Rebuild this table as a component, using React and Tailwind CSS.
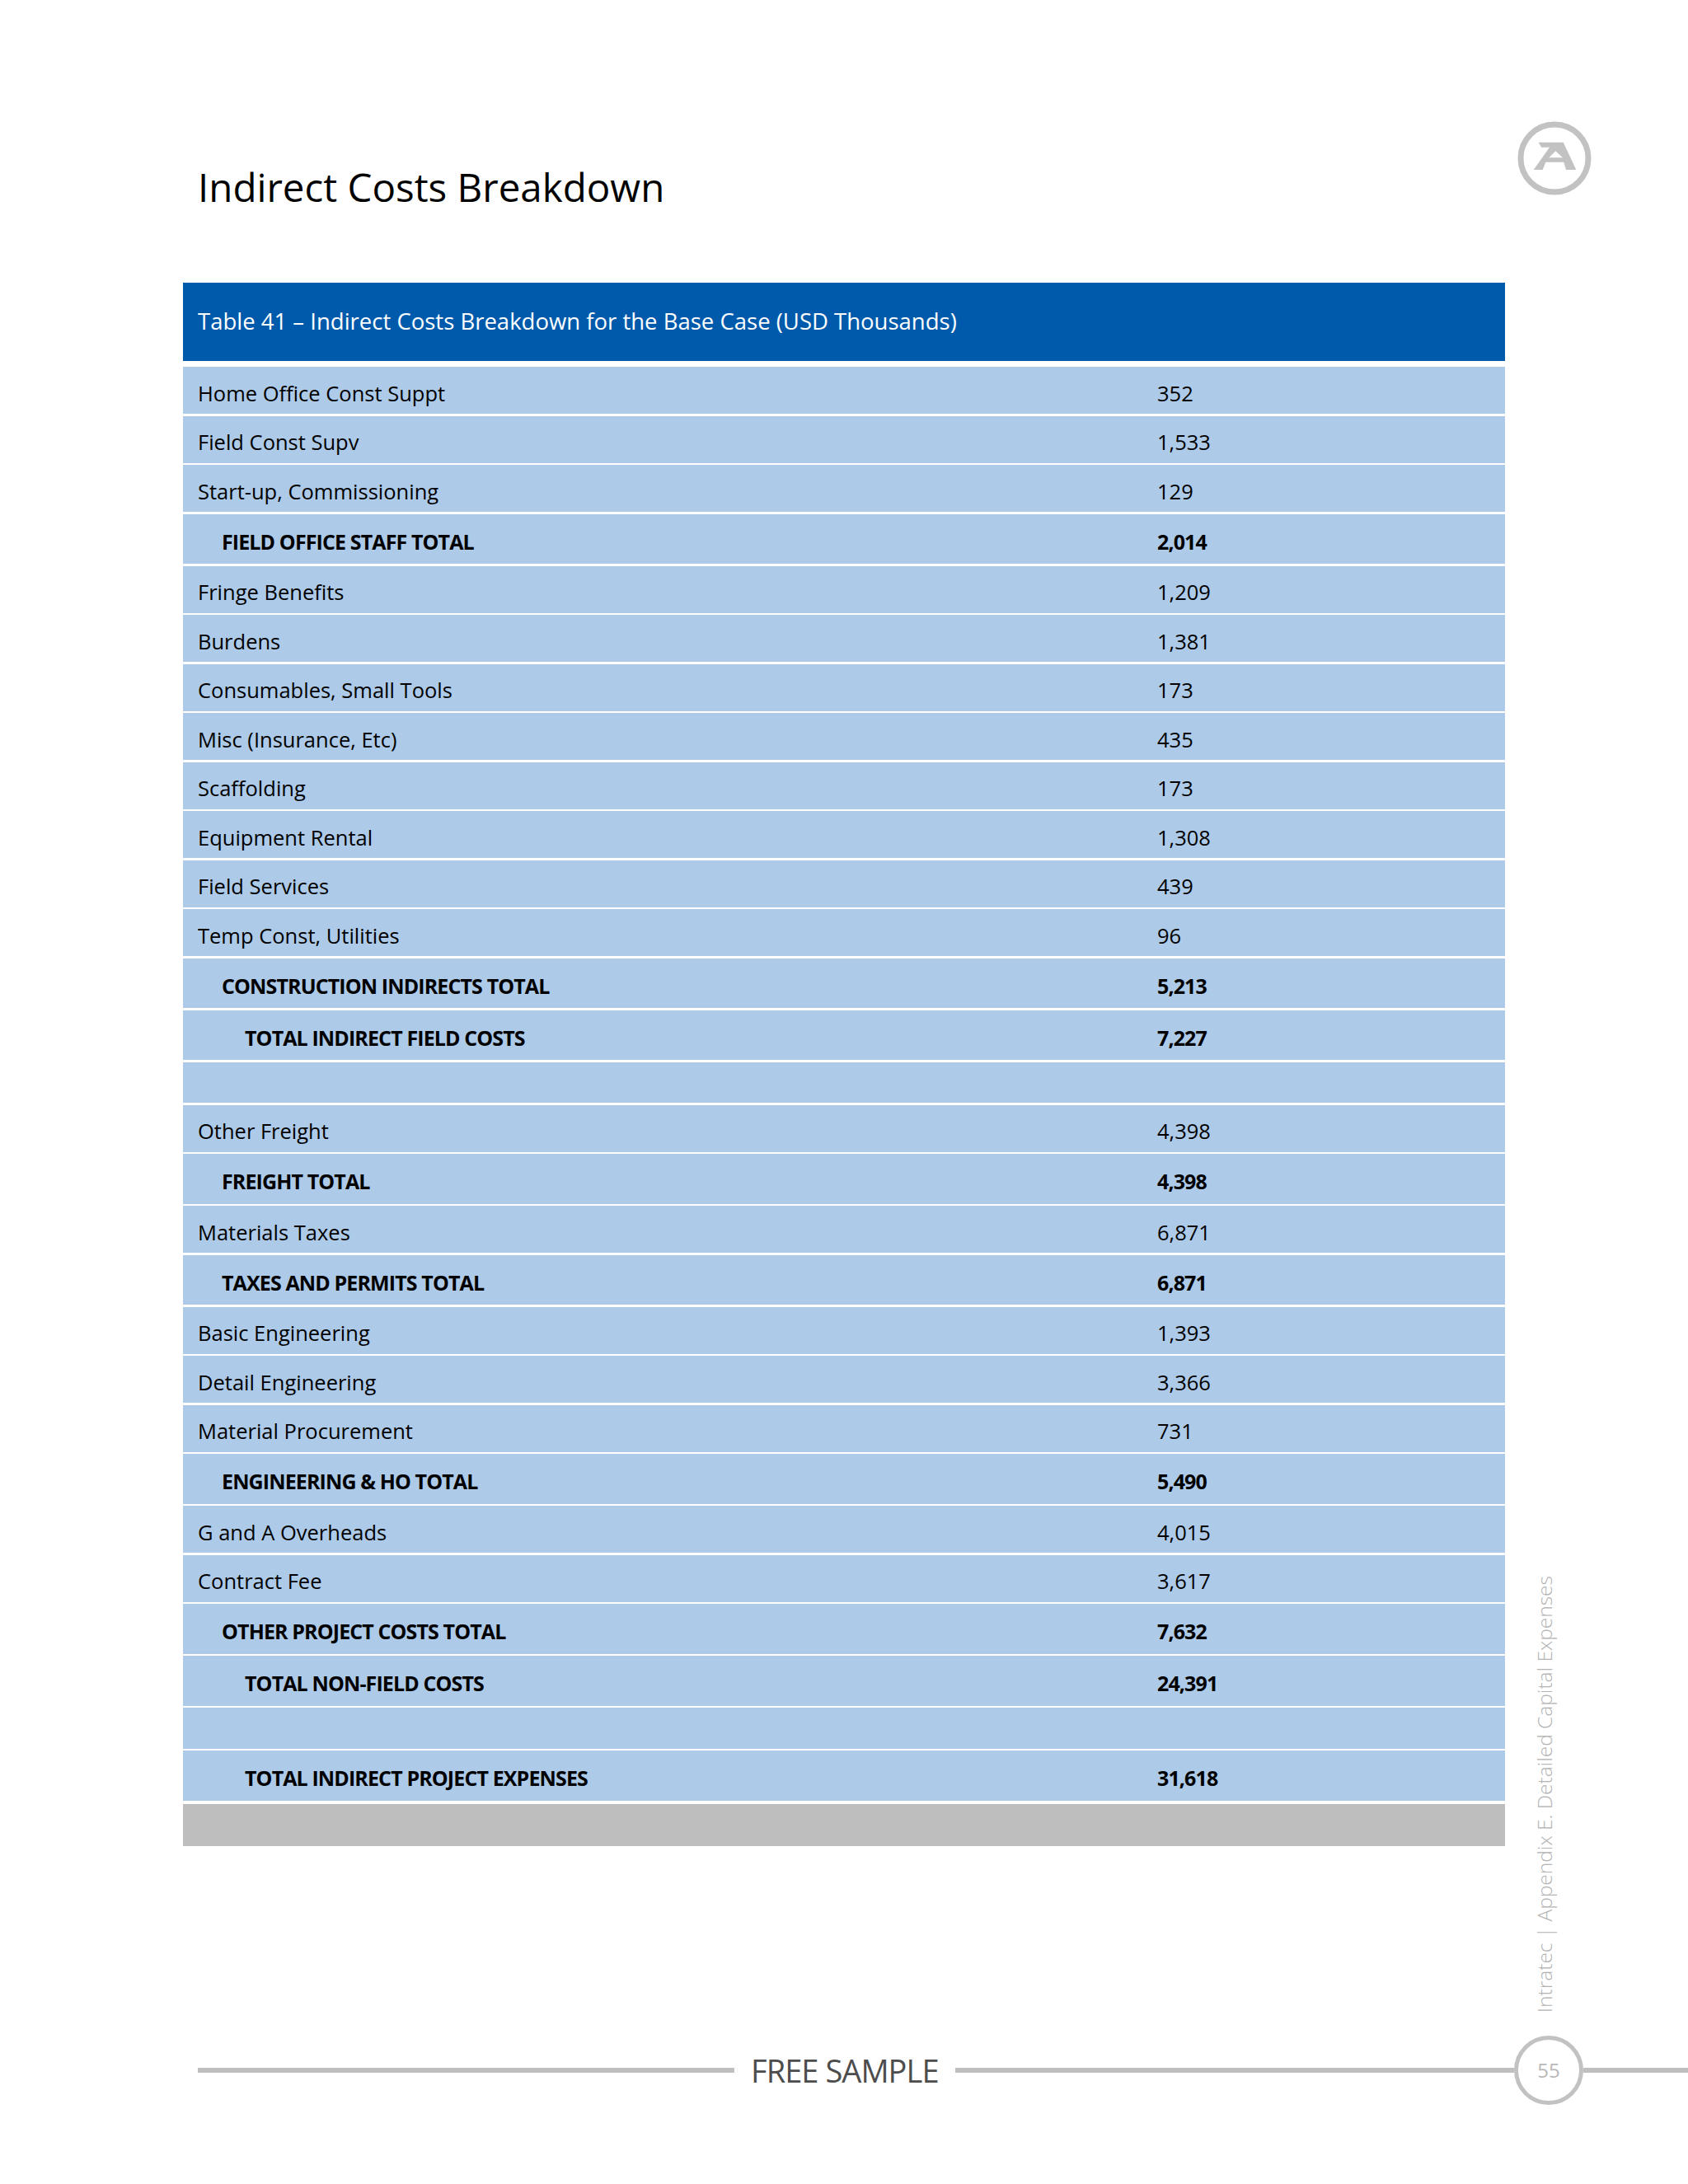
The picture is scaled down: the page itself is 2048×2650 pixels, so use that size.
const rows = [
  ["Home Office Const Suppt", "352"],
  ["Field Const Supv", "1,533"],
  ["Start-up, Commissioning", "129"],
  ["FIELD OFFICE STAFF TOTAL", "2,014", 1],
  ["Fringe Benefits", "1,209"],
  ["Burdens", "1,381"],
  ["Consumables, Small Tools", "173"],
  ["Misc (Insurance, Etc)", "435"],
  ["Scaffolding", "173"],
  ["Equipment Rental", "1,308"],
  ["Field Services", "439"],
  ["Temp Const, Utilities", "96"],
  ["CONSTRUCTION INDIRECTS TOTAL", "5,213", 1],
  ["TOTAL INDIRECT FIELD COSTS", "7,227", 2],
  null,
  ["Other Freight", "4,398"],
  ["FREIGHT TOTAL", "4,398", 1],
  ["Materials Taxes", "6,871"],
  ["TAXES AND PERMITS TOTAL", "6,871", 1],
  ["Basic Engineering", "1,393"],
  ["Detail Engineering", "3,366"],
  ["Material Procurement", "731"],
  ["ENGINEERING & HO TOTAL", "5,490", 1],
  ["G and A Overheads", "4,015"],
  ["Contract Fee", "3,617"],
  ["OTHER PROJECT COSTS TOTAL", "7,632", 1],
  ["TOTAL NON-FIELD COSTS", "24,391", 2],
  null,
  ["TOTAL INDIRECT PROJECT EXPENSES", "31,618", 2],
];

function Logo() {
  return (
    <svg width="90" height="90" viewBox="0 0 90 90" className="shrink-0">
      <circle cx="45" cy="45" r="41" fill="none" stroke="#c2c2c2" strokeWidth="7" />
      <path
        fillRule="evenodd"
        fill="#c2c2c2"
        d="M25.7 25.7 L55.7 25.7 L71.3 59 L59 59 L56.3 49.7 L34.3 49.7 L30.7 59 L19.7 59 L39 31.7 L29 31.7 Z M46.3 36.3 L55 44.3 L38.3 44.3 Z"
      />
    </svg>
  );
}

function Row({ row }) {
  if (!row) {
    return <div className="h-[49.5px] mt-[2.5px] bg-[#adcae8]" />;
  }
  const [label, value, level] = row;
  const total = !!level;
  const pad = level === 2 ? "pl-[75px]" : level === 1 ? "pl-[47px]" : "pl-[18px]";
  return (
    <div
      className={`flex items-center mt-[2.5px] bg-[#adcae8] text-black ${
        total ? "h-[60.5px] font-bold tracking-[-0.035em] text-[25px]" : "h-[57px] text-[25.5px]"
      }`}
    >
      <div className={`w-[1182px] pt-[7px] ${pad}`}>{label}</div>
      <div className="pt-[7px]">{value}</div>
    </div>
  );
}

export default function App() {
  return (
    <div
      className="relative w-[2048px] h-[2650px] bg-white"
      style={{ fontFamily: '"Open Sans", "Noto Sans", sans-serif' }}
    >
      {/* title + logo */}
      <div className="flex justify-between items-start pl-[240px] pr-[117px] pt-[147px]">
        <h1 className="text-[47.5px] leading-none text-black mt-[56px]">Indirect Costs Breakdown</h1>
        <Logo />
      </div>

      {/* table */}
      <div className="ml-[222px] w-[1604px] mt-[92px]">
        <div className="h-[95px] bg-[#005aab] flex items-center pl-[18px] text-white text-[27.5px]">
          Table 41 – Indirect Costs Breakdown for the Base Case (USD Thousands)
        </div>
        <div className="mt-[7.5px]">
          {rows.map((r, i) => (
            <Row key={i} row={r} />
          ))}
        </div>
        <div className="h-[51px] mt-[4px] bg-[#bebebe]" />
      </div>

      {/* side caption */}
      <div className="absolute left-[1860px] bottom-[208px] whitespace-nowrap font-light text-[24.5px] leading-[28px] text-[#b3b3b3] [writing-mode:vertical-rl] rotate-180">
        Intratec | Appendix E. Detailed Capital Expenses
      </div>

      {/* footer */}
      <div className="absolute left-0 right-0 top-[2470px] flex items-center pl-[240px]">
        <div className="w-[651px] h-[6px] bg-[#bfbfbf]" />
        <div className="px-[20px] whitespace-nowrap text-[38px] tracking-[-0.025em] leading-none text-[#4d4d4d]">
          FREE SAMPLE
        </div>
        <div className="flex-1 h-[6px] bg-[#bfbfbf]" />
        <div className="w-[84px] h-[84px] rounded-full border-[5px] border-[#c2c2c2] flex items-center justify-center text-[24px] text-[#b8b8b8]">
          55
        </div>
        <div className="w-[127px] h-[6px] bg-[#bfbfbf]" />
      </div>
    </div>
  );
}
